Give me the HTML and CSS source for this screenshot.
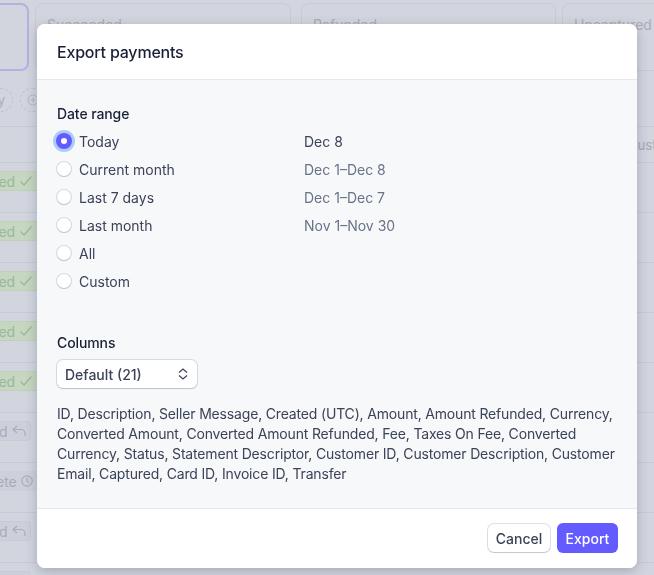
FILE: index.html

```html
<!DOCTYPE html>
<html>
<head>
  <title>Export payments</title>
  <link rel="stylesheet" href="styles.css">
</head>
<body>

<!-- page behind the dialog -->
<div class="page">
  <div class="cards">
    <div class="card card-active"></div>
    <div class="card card-wide"><span>Succeeded</span></div>
    <div class="card card-wide"><span>Refunded</span></div>
    <div class="card card-last"><span>Uncaptured</span></div>
  </div>
  <div class="filters">
    <div class="pill pill-text">y</div>
    <div class="pill pill-icon">
      <svg width="12" height="12" viewBox="0 0 12 12" fill="none" stroke="#b4b8c4" stroke-width="1"><circle cx="6" cy="6" r="5"/><path d="M6 3.5v5M3.5 6h5"/></svg>
    </div>
  </div>
  <div class="head-row"><span>Customer</span></div>
  <div class="row"><span class="badge badge-green">led
    <svg width="14" height="12" viewBox="0 0 14 12" fill="none" stroke="#9ab89a" stroke-width="1.2"><path d="M1.5 6.5l3.5 3.5 7.5-8.5"/></svg></span></div>
  <div class="row"><span class="badge badge-green">led
    <svg width="14" height="12" viewBox="0 0 14 12" fill="none" stroke="#9ab89a" stroke-width="1.2"><path d="M1.5 6.5l3.5 3.5 7.5-8.5"/></svg></span></div>
  <div class="row"><span class="badge badge-green">led
    <svg width="14" height="12" viewBox="0 0 14 12" fill="none" stroke="#9ab89a" stroke-width="1.2"><path d="M1.5 6.5l3.5 3.5 7.5-8.5"/></svg></span></div>
  <div class="row"><span class="badge badge-green">led
    <svg width="14" height="12" viewBox="0 0 14 12" fill="none" stroke="#9ab89a" stroke-width="1.2"><path d="M1.5 6.5l3.5 3.5 7.5-8.5"/></svg></span></div>
  <div class="row"><span class="badge badge-green">led
    <svg width="14" height="12" viewBox="0 0 14 12" fill="none" stroke="#9ab89a" stroke-width="1.2"><path d="M1.5 6.5l3.5 3.5 7.5-8.5"/></svg></span></div>
  <div class="row"><span class="badge badge-gray">d
    <svg width="14" height="12" viewBox="0 0 14 12" fill="none" stroke="#a9adb9" stroke-width="1.2"><path d="M5 1L1 4.5 5 8M1 4.5h8a4 4 0 0 1 4 4V11"/></svg></span></div>
  <div class="row"><span class="badge badge-plain">ete
    <svg width="12" height="12" viewBox="0 0 12 12" fill="none" stroke="#a9adb9" stroke-width="1.2"><circle cx="6" cy="6" r="5.2"/><path d="M6 2.8v3.4l2.2 1.3"/></svg></span></div>
  <div class="row"><span class="badge badge-gray">d
    <svg width="14" height="12" viewBox="0 0 14 12" fill="none" stroke="#a9adb9" stroke-width="1.2"><path d="M5 1L1 4.5 5 8M1 4.5h8a4 4 0 0 1 4 4V11"/></svg></span></div>
  <div class="row"><span class="badge badge-gray"></span></div>
</div>

<!-- Modal -->
<div class="modal">
  <div class="modal-header">Export payments</div>
  <div class="modal-body">
    <h3 class="label">Date range</h3>
    <div class="range-list">
      <div class="range"><span class="radio radio-on"></span><span class="range-name">Today</span><span class="range-date date-now">Dec 8</span></div>
      <div class="range"><span class="radio"></span><span class="range-name">Current month</span><span class="range-date">Dec 1–Dec 8</span></div>
      <div class="range"><span class="radio"></span><span class="range-name">Last 7 days</span><span class="range-date">Dec 1–Dec 7</span></div>
      <div class="range"><span class="radio"></span><span class="range-name">Last month</span><span class="range-date">Nov 1–Nov 30</span></div>
      <div class="range"><span class="radio"></span><span class="range-name">All</span></div>
      <div class="range"><span class="radio"></span><span class="range-name">Custom</span></div>
    </div>
    <h3 class="label label-columns">Columns</h3>
    <div class="select">
      <span>Default (21)</span>
      <svg width="12" height="12" viewBox="0 0 12 12" fill="none" stroke="#3c4257" stroke-width="1.2"><path d="M2 4.5L6 1l4 3.5M2 7.5L6 11l4-3.5"/></svg>
    </div>
    <p class="column-list">ID, Description, Seller Message, Created (UTC), Amount, Amount Refunded, Currency, Converted Amount, Converted Amount Refunded, Fee, Taxes On Fee, Converted Currency, Status, Statement Descriptor, Customer ID, Customer Description, Customer Email, Captured, Card ID, Invoice ID, Transfer</p>
  </div>
  <div class="modal-footer">
    <button class="btn-cancel">Cancel</button>
    <button class="btn-export">Export</button>
  </div>
</div>

</body>
</html>
```

FILE: styles.css

```css
html, body {
  margin: 0;
  height: 100%;
  overflow: hidden;
}
body {
  font-family: Inter, "Liberation Sans", sans-serif;
  background: #d2d5de;
  color: #a9adb9;
  font-size: 14px;
}

/* Page behind the dialog */
.page {
  height: 575px;
  overflow: hidden;
}
.cards {
  display: flex;
  gap: 6px;
  padding-top: 3px;
  margin-left: -60px;
  height: 68px;
}
.card {
  border: 1px solid #c7cbd5;
  border-radius: 8px;
  box-sizing: border-box;
  padding: 12px 11px;
  height: 68px;
  flex: none;
}
.card-active {
  width: 89px;
  border: 2px solid #b0b3e2;
}
.card-wide {
  width: 256px;
  margin-right: 4px;
}
.card-wide + .card-wide {
  width: 255px;
  margin-right: 0;
}
.card-last {
  width: 200px;
}
.filters {
  display: flex;
  gap: 7px;
  margin-left: -11px;
  padding-top: 17px;
  height: 38px;
  border-bottom: 1px solid #c7cbd5;
}
.pill {
  height: 24px;
  border: 1px dashed #bfc3ce;
  border-radius: 12px;
  box-sizing: border-box;
  display: flex;
  align-items: center;
}
.pill-text {
  width: 24px;
  font-size: 13px;
  justify-content: flex-end;
  padding-right: 7px;
}
.pill-icon {
  width: 50px;
  padding-left: 6px;
}
.head-row {
  height: 35px;
  border-bottom: 1px solid #c7cbd5;
  display: flex;
  align-items: center;
  padding-left: 628px;
  font-size: 13px;
  font-weight: 500;
  white-space: nowrap;
}
.row {
  height: 50px;
  box-sizing: border-box;
  border-bottom: 1px solid #c7cbd5;
  padding-top: 8px;
}
.badge {
  display: flex;
  align-items: center;
  gap: 4px;
  height: 20px;
  box-sizing: border-box;
  border-radius: 4px;
  font-size: 14px;
}
.badge-green {
  width: 62px;
  margin-left: -14px;
  padding-left: 8px;
  background: #c6d6c0;
  border: 1px solid #bdd1b7;
  color: #9ab89a;
}
.badge-gray {
  width: 40px;
  margin-left: -9px;
  padding-left: 7px;
  background: #cdd0da;
  border: 1px solid #c7cbd5;
}
.badge-plain {
  width: 54px;
  margin-left: -12px;
  padding-left: 8px;
  background: #cdd0da;
}

/* Modal */
.modal {
  position: fixed;
  top: 24px;
  left: 37px;
  width: 600px;
  height: 544px;
  display: flex;
  flex-direction: column;
  background: #f6f8fa;
  border-radius: 8px;
  overflow: hidden;
  box-shadow: 0 3px 12px rgba(60, 66, 87, 0.3);
  color: #3c4257;
}
.modal-header {
  height: 55px;
  flex: none;
  display: flex;
  align-items: center;
  padding: 0 20px;
  background: #fff;
  border-bottom: 1px solid #e6e8ec;
  color: #1a1f36;
  font-size: 16px;
  font-weight: 500;
  letter-spacing: -0.2px;
}
.modal-body {
  flex: 1;
  padding: 24px 20px 0;
}
.label {
  margin: 0;
  font-size: 14px;
  line-height: 20px;
  font-weight: 500;
  letter-spacing: -0.1px;
  color: #1a1f36;
}
.range-list {
  display: flex;
  flex-direction: column;
  margin-top: 3px;
}
.range {
  display: flex;
  align-items: center;
  height: 28px;
}
.radio {
  width: 14px;
  height: 14px;
  box-sizing: border-box;
  margin-right: 8px;
  border-radius: 50%;
  background: #fff;
  box-shadow: 0 0 0 1px rgba(60, 66, 87, 0.16), 0 1px 1px rgba(0, 0, 0, 0.12);
}
.radio-on {
  border: 4px solid #635bff;
  box-shadow: 0 0 0 1px #635bff, 0 0 0 4px #a9cdf6;
}
.range-name {
  width: 225px;
}
.range-date {
  color: #697386;
}
.date-now {
  color: #3c4257;
}
.label-columns {
  margin-top: 38px;
}
.select {
  margin-top: 7px;
  width: 140px;
  height: 28px;
  box-sizing: border-box;
  display: flex;
  align-items: center;
  justify-content: space-between;
  padding: 0 8px;
  background: #fff;
  border-radius: 6px;
  box-shadow: 0 0 0 1px rgba(60, 66, 87, 0.16), 0 1px 1px rgba(0, 0, 0, 0.12);
  font-weight: 500;
}
.column-list {
  margin: 16px -4px 0 0;
  line-height: 20px;
  letter-spacing: -0.17px;
}
.modal-footer {
  height: 60px;
  flex: none;
  box-sizing: border-box;
  display: flex;
  justify-content: flex-end;
  align-items: center;
  gap: 7px;
  padding: 0 19px 1px;
  background: #fff;
  border-top: 1px solid #e6e8ec;
}
button {
  border: none;
  border-radius: 6px;
  padding: 0;
  font-family: inherit;
  font-size: 14px;
  font-weight: 500;
  cursor: pointer;
}
.btn-cancel {
  width: 62px;
  height: 28px;
  background: #fff;
  color: #3c4257;
  box-shadow: 0 0 0 1px rgba(60, 66, 87, 0.16), 0 1px 1px rgba(0, 0, 0, 0.12);
}
.btn-export {
  width: 61px;
  height: 30px;
  background: #635bff;
  color: #fff;
}
```
